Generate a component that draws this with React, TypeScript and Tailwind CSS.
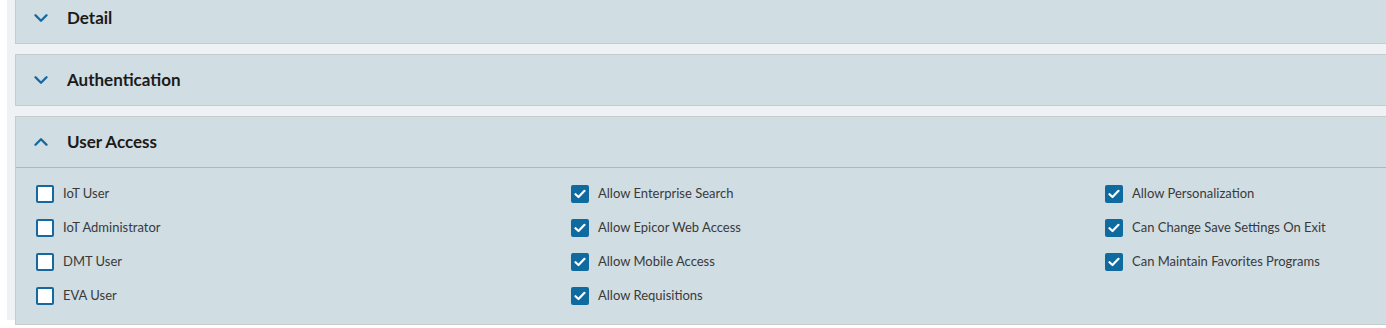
import { ChevronDown, ChevronUp } from "lucide-react";

// Access flags
interface Iflag {
  label: string;
  checked: boolean;
}

const columns: Iflag[][] = [
  [
    { label: "IoT User", checked: false },
    { label: "IoT Administrator", checked: false },
    { label: "DMT User", checked: false },
    { label: "EVA User", checked: false },
  ],
  [
    { label: "Allow Enterprise Search", checked: true },
    { label: "Allow Epicor Web Access", checked: true },
    { label: "Allow Mobile Access", checked: true },
    { label: "Allow Requisitions", checked: true },
  ],
  [
    { label: "Allow Personalization", checked: true },
    { label: "Can Change Save Settings On Exit", checked: true },
    { label: "Can Maintain Favorites Programs", checked: true },
  ],
];

function Checkbox({ checked }: { checked: boolean }) {
  if (checked) {
    return (
      <span className="w-[18px] h-[18px] rounded-[2px] bg-[#0f6aa0] flex items-center justify-center shrink-0">
        <svg width="12" height="10" viewBox="0 0 12 10" fill="none">
          <path d="M1.5 5.2 L4.5 8 L10.5 1.8" stroke="white" strokeWidth="2.2" strokeLinecap="round" strokeLinejoin="round" />
        </svg>
      </span>
    );
  }
  return <span className="w-[18px] h-[18px] rounded-[2px] border-2 border-[#1668a0] bg-white shrink-0" />;
}

function PanelHeader({ title, open }: { title: string; open?: boolean }) {
  return (
    <div className="h-[50px] flex items-center pl-[14px]">
      <span className="w-[22px] flex justify-center text-[#1668a0]">
        {open ? <ChevronUp size={22} strokeWidth={2.6} /> : <ChevronDown size={22} strokeWidth={2.6} />}
      </span>
      <span className="ml-[15px] text-[17px] font-bold text-[#1b1b1b]">{title}</span>
    </div>
  );
}

export default function App() {
  return (
    <div
      className="w-[1386px] h-[328px] overflow-hidden bg-white pl-[7px]"
      style={{ fontFamily: "Lato, 'Noto Sans', sans-serif" }}
    >
      <div className="h-full bg-[#eef2f5] pl-[8px] -mt-[8px] pb-[20px] flex flex-col gap-[10px]">
        {/* Detail */}
        <div className="bg-[#d0dde2] border border-r-0 border-[#c6cbce]">
          <PanelHeader title="Detail" />
        </div>

        {/* Authentication */}
        <div className="bg-[#d0dde2] border border-r-0 border-[#c6cbce]">
          <PanelHeader title="Authentication" />
        </div>

        {/* User Access */}
        <div className="bg-[#d0dde2] border border-r-0 border-[#c6cbce]">
          <PanelHeader title="User Access" open />
          <div className="border-t border-[#8fc3d1] grid grid-cols-[535px_534px_1fr] pl-[20px] pt-[9px] pb-[11px]">
            {columns.map((col, i) => (
              <div key={i} className="flex flex-col">
                {col.map((f) => (
                  <div key={f.label} className="h-[34px] flex items-center gap-[9px]">
                    <Checkbox checked={f.checked} />
                    <span className="text-[13px] text-[#3a3a3a]">{f.label}</span>
                  </div>
                ))}
              </div>
            ))}
          </div>
        </div>
      </div>
    </div>
  );
}
